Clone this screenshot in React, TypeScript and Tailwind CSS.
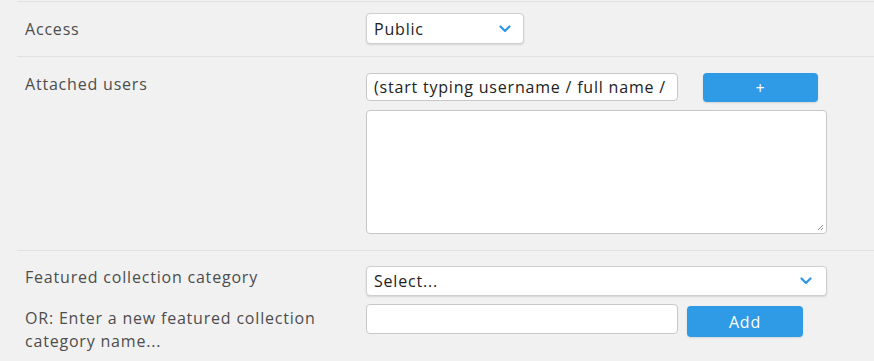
import React from "react";

const Chevron = () => (
  <svg width="12" height="8" viewBox="0 0 12 8" className="shrink-0">
    <path d="M1.5 1.5 L6 6 L10.5 1.5" fill="none" stroke="#2f97e6" strokeWidth="2.2" strokeLinecap="round" strokeLinejoin="round" />
  </svg>
);

export default function App() {
  const font = { fontFamily: '"Open Sans", "Noto Sans", sans-serif' };
  return (
    <div className="w-[874px] h-[361px] overflow-hidden bg-[#f1f1f1] pt-px tracking-[0.8px]" style={font}>
      {/* Access */}
      <div className="ml-[17px] border-t border-[#e1e1e1] flex items-center pt-[11px] pb-[12px]">
        <div className="w-[349px] pl-2 text-[16px] text-[#4d4d4d]">Access</div>
        <div className="w-[158px] h-[31px] bg-white border border-[#cfcfcf] rounded-[4px] shadow-[0_1px_2px_rgba(0,0,0,0.12)] flex items-center justify-between pl-[7px] pr-[12px] text-[16px] text-[#222]">
          <span>Public</span>
          <Chevron />
        </div>
      </div>

      {/* Attached users */}
      <div className="ml-[17px] border-t border-[#e1e1e1] flex pt-[16px] pb-[16px]">
        <div className="w-[349px] pl-2 text-[16px] leading-[22px] text-[#4d4d4d]">Attached users</div>
        <div className="flex flex-col gap-2">
          <div className="flex items-start gap-[25px]">
            <div className="w-[312px] h-[28px] bg-white border border-[#c8c8c8] rounded-[4px] flex items-center pl-[7px] text-[16px] text-[#222] overflow-hidden whitespace-nowrap">
              (start typing username / full name /
            </div>
            <button className="w-[115px] h-[29px] bg-[#2f9ae6] rounded-[4px] text-white text-[16px] leading-none shadow-[0_1px_2px_rgba(0,0,0,0.12)]">+</button>
          </div>
          <div className="relative w-[461px] h-[124px] bg-white border border-[#c8c8c8] rounded-[4px]">
            <svg width="8" height="8" viewBox="0 0 8 8" className="absolute right-[2px] bottom-[2px]">
              <path d="M7 2 L2 7 M7 5 L5 7" stroke="#8a8a8a" strokeWidth="1" />
            </svg>
          </div>
        </div>
      </div>

      {/* Featured collection category */}
      <div className="ml-[17px] border-t border-[#e1e1e1] pt-[15px]">
        <div className="flex items-start">
          <div className="w-[349px] pl-2 text-[16px] leading-[23px] text-[#4d4d4d]">Featured collection category</div>
          <div className="w-[461px] h-[30px] bg-white border border-[#cfcfcf] rounded-[4px] shadow-[0_1px_2px_rgba(0,0,0,0.12)] flex items-center justify-between pl-[7px] pr-[14px] text-[16px] text-[#222]">
            <span>Select...</span>
            <Chevron />
          </div>
        </div>
        <div className="flex mt-[8px]">
          <div className="w-[349px] pl-2 pr-6 text-[16px] leading-[23px] text-[#4d4d4d] pt-[3px]">
            OR: Enter a new featured collection category name...
          </div>
          <div className="flex items-start gap-[9px]">
            <div className="w-[312px] h-[30px] bg-white border border-[#c8c8c8] rounded-[4px]" />
            <button className="mt-[2px] w-[116px] h-[31px] bg-[#2f9ae6] rounded-[4px] text-white text-[16px] shadow-[0_1px_2px_rgba(0,0,0,0.12)]">Add</button>
          </div>
        </div>
      </div>
    </div>
  );
}
